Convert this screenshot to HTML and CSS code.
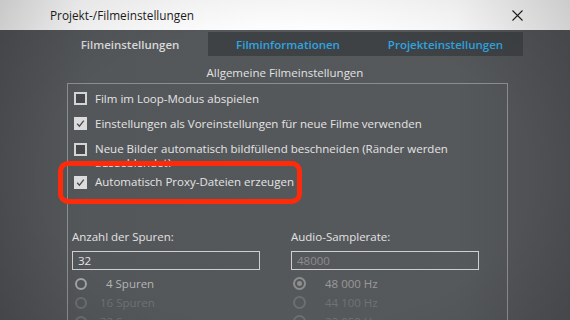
FILE: index.html
```html
<!DOCTYPE html>
<html lang="de">
<head>
<meta charset="utf-8">
<title>Projekt-/Filmeinstellungen</title>
<link rel="stylesheet" href="styles.css">
</head>
<body>
<div class="window">
  <header class="titlebar">
    <span class="title">Projekt-/Filmeinstellungen</span>
    <svg class="close" width="11" height="11" viewBox="0 0 11 11"><path d="M0.5 0.5 L10.5 10.5 M10.5 0.5 L0.5 10.5" stroke="#1e1e1e" stroke-width="1.1" fill="none"/></svg>
  </header>
  <main class="panel">
    <nav class="tabs">
      <div class="tab tab-active">Filmeinstellungen</div>
      <div class="tab tab-dark tab-info">Filminformationen</div>
      <div class="tab tab-dark tab-proj">Projekteinstellungen</div>
    </nav>
    <div class="section-title">Allgemeine Filmeinstellungen</div>
    <section class="group">
      <div class="row">
        <span class="check"></span>
        <span class="label">Film im Loop-Modus abspielen</span>
      </div>
      <div class="row">
        <span class="check checked"><svg width="13" height="13" viewBox="0 0 13 13"><path d="M3.2 6.8 L5.4 9.2 L9.8 3.6" stroke="#4a4c4f" stroke-width="1.3" fill="none"/></svg></span>
        <span class="label">Einstellungen als Voreinstellungen für neue Filme verwenden</span>
      </div>
      <div class="row row-wrap">
        <span class="check"></span>
        <span class="label label-wrap">Neue Bilder automatisch bildfüllend beschneiden (Ränder werden ausgeblendet)</span>
      </div>
      <div class="row row-last">
        <span class="check checked"><svg width="13" height="13" viewBox="0 0 13 13"><path d="M3.2 6.8 L5.4 9.2 L9.8 3.6" stroke="#4a4c4f" stroke-width="1.3" fill="none"/></svg></span>
        <span class="label">Automatisch Proxy-Dateien erzeugen</span>
      </div>
      <div class="columns">
        <div class="col col-left">
          <div class="field-label">Anzahl der Spuren:</div>
          <div class="input">32</div>
          <div class="radio-row"><span class="radio"></span><span class="radio-text">&nbsp;&nbsp;4 Spuren</span></div>
          <div class="radio-row faded"><span class="radio"></span><span class="radio-text">16 Spuren</span></div>
          <div class="radio-row faded"><span class="radio"></span><span class="radio-text">32 Spuren</span></div>
        </div>
        <div class="col col-right">
          <div class="field-label">Audio-Samplerate:</div>
          <div class="input input-disabled">48000</div>
          <div class="radio-row dim"><span class="radio radio-on"></span><span class="radio-text">48 000 Hz</span></div>
          <div class="radio-row faded"><span class="radio"></span><span class="radio-text">44 100 Hz</span></div>
          <div class="radio-row faded"><span class="radio"></span><span class="radio-text">22 050 Hz</span></div>
        </div>
      </div>
    </section>
  </main>
  <div class="highlight"></div>
  <div class="vignette"></div>
</div>
</body>
</html>
```
FILE: styles.css
```css
* { box-sizing: border-box; }
html, body { margin: 0; padding: 0; }
body {
  width: 570px;
  height: 320px;
  overflow: hidden;
  font-family: "Open Sans", "Noto Sans", sans-serif;
  font-size: 11.5px;
  background: #55585b;
}
.window {
  position: relative;
  width: 570px;
  height: 320px;
  overflow: hidden;
}
.titlebar {
  height: 30px;
  display: flex;
  align-items: center;
  justify-content: space-between;
  padding: 0 47px 0 50px;
  background: linear-gradient(to right, #e4e4e4 0%, #fbfbfb 14%, #fefefe 80%, #e8e8e8 100%);
}
.title {
  color: #1b1b1b;
  font-size: 11.8px;
}
.close { display: block; margin-top: 1px; }
.panel {
  height: 290px;
  padding-top: 2px;
  background: linear-gradient(to right, #4b4d50 0%, #54575a 15%, #56595c 80%, #4c4e51 100%);
}
.tabs {
  display: flex;
  height: 24px;
  margin-left: 52px;
}
.tab {
  display: flex;
  align-items: center;
  justify-content: center;
  font-weight: 600;
  font-size: 11.5px;
  white-space: nowrap;
}
.tab-active { width: 156px; color: #dadada; }
.tab-dark { background: #3f4245; color: #2ea5e0; }
.tab-info { width: 160px; }
.tab-proj { width: 155px; }
.section-title {
  margin-top: 9px;
  height: 16px;
  line-height: 16px;
  text-align: center;
  color: #e2e2e2;
}
.group {
  margin: 2px 0 0 67px;
  width: 441px;
  height: 260px;
  border: 1px solid #8b8d90;
  border-bottom: none;
  padding-top: 2px;
}
.row {
  display: flex;
  align-items: center;
  height: 25px;
  padding-left: 6px;
}
.row-wrap {
  align-items: flex-start;
  height: 31px;
  padding-top: 6px;
  overflow: hidden;
}
.row-last { height: 30px; }
.check {
  flex: none;
  width: 13px;
  height: 13px;
  border: 2px solid #d4d4d4;
  background: #45474a;
  margin-right: 8px;
  position: relative;
}
.row-wrap .check { margin-top: 1px; }
.check.checked {
  background: #dcdcdc;
  border-color: #dcdcdc;
}
.check svg { position: absolute; left: -2px; top: -2px; }
.label {
  color: #e4e4e4;
  white-space: nowrap;
  line-height: 14px;
}
.label-wrap {
  white-space: normal;
  width: 356px;
}
.columns {
  display: flex;
  gap: 31px;
  margin-top: 32px;
  padding-left: 4px;
}
.col { width: 188px; }
.field-label {
  height: 16px;
  line-height: 16px;
  color: #e2e2e2;
}
.input {
  margin-top: 6px;
  height: 19px;
  border: 1px solid #cfcfcf;
  padding-left: 5px;
  line-height: 17px;
  color: #e4e4e4;
}
.input-disabled { color: #8a8c8f; }
.radio-row {
  display: flex;
  align-items: center;
  height: 19px;
  color: #b4b4b4;
}
.input + .radio-row { margin-top: 4px; }
.radio {
  flex: none;
  width: 12px;
  height: 12px;
  border: 2px solid #a4a4a4;
  border-radius: 50%;
  margin-left: 3px;
  margin-right: 13px;
  position: relative;
}
.col-right .radio { margin-left: 2px; margin-right: 19px; width: 13px; height: 13px; }
.radio-on::after {
  content: "";
  position: absolute;
  left: 2px;
  top: 2px;
  width: 5px;
  height: 5px;
  border-radius: 50%;
  background: #8e8e8e;
}
.dim { color: #9a9a9a; }
.dim .radio { border-color: #8e8e8e; }
.faded { color: #6f7275; }
.faded .radio { border-color: #6c6f72; }
.highlight {
  position: absolute;
  left: 58px;
  top: 161px;
  width: 244px;
  height: 43px;
  border: 5px solid #ff2a0a;
  border-radius: 10px;
  pointer-events: none;
}
.vignette {
  position: absolute;
  inset: 0;
  pointer-events: none;
  background: radial-gradient(ellipse at 50% 55%, rgba(0,0,0,0) 60%, rgba(0,0,0,0.12) 100%);
}
```
